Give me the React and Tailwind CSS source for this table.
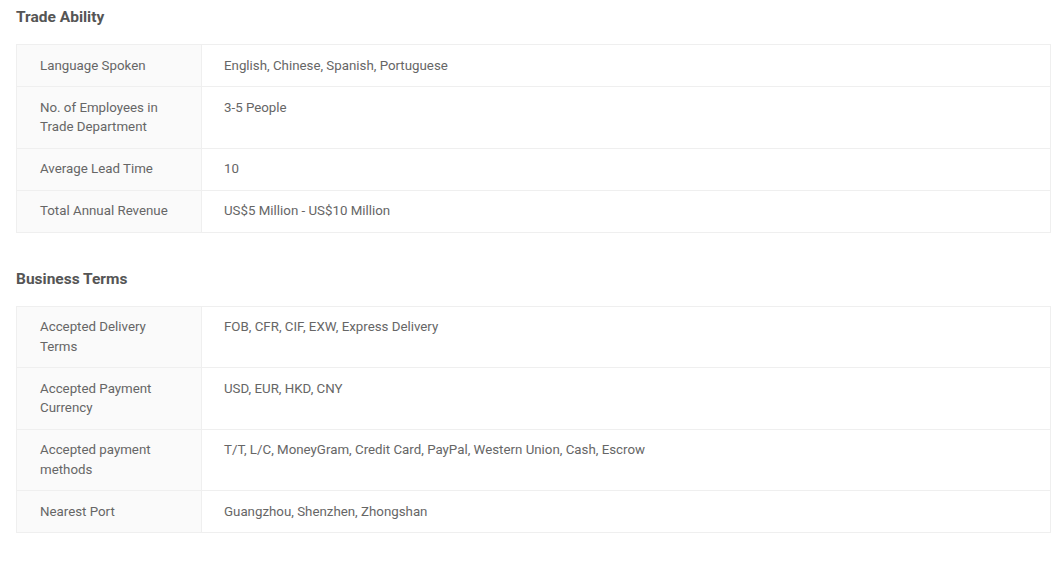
import React from 'react';

const sections = [
  {
    title: 'Trade Ability',
    rows: [
      ['Language Spoken', 'English, Chinese, Spanish, Portuguese'],
      ['No. of Employees in Trade Department', '3-5 People'],
      ['Average Lead Time', '10'],
      ['Total Annual Revenue', 'US$5 Million - US$10 Million'],
    ],
  },
  {
    title: 'Business Terms',
    rows: [
      ['Accepted Delivery Terms', 'FOB, CFR, CIF, EXW, Express Delivery'],
      ['Accepted Payment Currency', 'USD, EUR, HKD, CNY'],
      ['Accepted payment methods', 'T/T, L/C, MoneyGram, Credit Card, PayPal, Western Union, Cash, Escrow'],
      ['Nearest Port', 'Guangzhou, Shenzhen, Zhongshan'],
    ],
  },
];

function InfoTable({ rows }) {
  return (
    <div className="border border-[#efefef] w-[1035px]">
      {rows.map(([label, value], i) => (
        <div key={i} className={`flex ${i > 0 ? 'border-t border-[#efefef]' : ''}`}>
          <div className="w-[185px] shrink-0 bg-[#fafafa] border-r border-[#efefef] pl-[23px] pr-6 py-[10.75px]">
            {label}
          </div>
          <div className="flex-1 pl-[22px] pr-6 py-[10.75px] bg-white">{value}</div>
        </div>
      ))}
    </div>
  );
}

export default function App() {
  return (
    <div
      className="bg-white min-h-screen px-4 pt-[5px] text-[13.3px] leading-[19.5px] text-[#666]"
      style={{ fontFamily: 'Roboto, "Liberation Sans", sans-serif' }}
    >
      {sections.map((s, i) => (
        <div key={s.title} className={i > 0 ? 'mt-[34px]' : ''}>
          <h2 className="text-[15.5px] leading-6 font-bold text-[#555] mb-[15px]">{s.title}</h2>
          <InfoTable rows={s.rows} />
        </div>
      ))}
    </div>
  );
}
